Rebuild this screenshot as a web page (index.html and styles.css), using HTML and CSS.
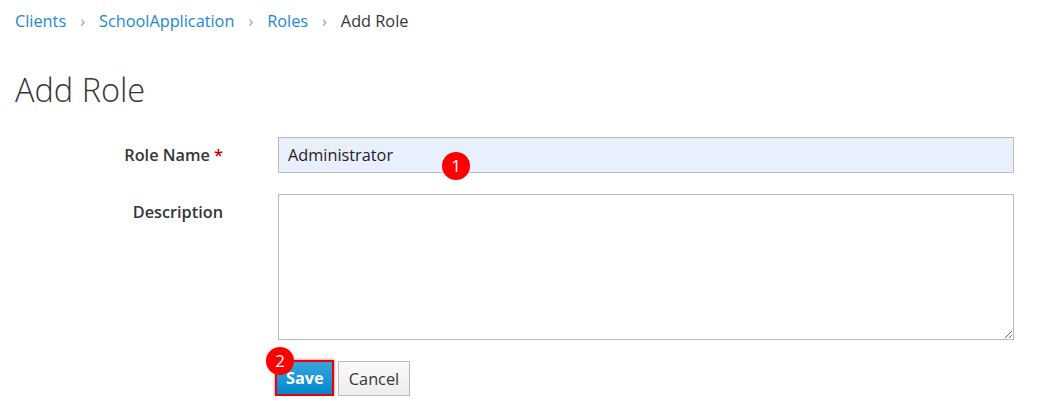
FILE: index.html
```html
<!DOCTYPE html>
<html>
<head>
<meta charset="utf-8">
<link rel="stylesheet" href="styles.css">
</head>
<body>
<div class="page">
  <nav class="breadcrumb">
    <a href="#">Clients</a><span class="sep">›</span>
    <a href="#">SchoolApplication</a><span class="sep">›</span>
    <a href="#">Roles</a><span class="sep">›</span>
    <span class="current">Add Role</span>
  </nav>
  <h1 class="title">Add Role</h1>
  <form class="form">
    <div class="row">
      <label class="label">Role Name <span class="req">*</span></label>
      <div class="field">
        <input class="input" type="text" value="Administrator">
        <span class="badge badge-1">1</span>
      </div>
    </div>
    <div class="row row-desc">
      <label class="label">Description</label>
      <div class="field">
        <textarea class="textarea"></textarea>
      </div>
    </div>
    <div class="actions">
      <div class="save-wrap">
        <button type="button" class="btn btn-primary">Save</button>
        <span class="badge badge-2">2</span>
      </div>
      <button type="button" class="btn btn-default">Cancel</button>
    </div>
  </form>
</div>
</body>
</html>
```
FILE: styles.css
```css
html, body {
  margin: 0;
  padding: 0;
  background: #fff;
}
body {
  font-family: "Open Sans", "Liberation Sans", sans-serif;
  color: #363636;
  font-size: 16px;
}
.page {
  padding: 8px 15px 0 15px;
}
.breadcrumb {
  display: flex;
  align-items: center;
  height: 26px;
  font-size: 16.3px;
}
.breadcrumb a {
  color: #1e87d4;
  text-decoration: none;
}
.breadcrumb .sep {
  color: #9a9c9e;
  margin: 0 14px;
  font-size: 16px;
}
.breadcrumb .current {
  color: #363636;
}
.title {
  margin: 36px 0 0 0;
  font-size: 32.5px;
  font-weight: 300;
  line-height: 40px;
  color: #363636;
}
.form {
  margin-top: 27px;
}
.row {
  display: flex;
  align-items: flex-start;
}
.label {
  width: 263px;
  text-align: right;
  font-weight: 600;
  font-size: 16.3px;
  line-height: 36px;
  padding-right: 55px;
  box-sizing: border-box;
  flex: none;
  color: #363636;
}
.req {
  color: #c00;
}
.field {
  position: relative;
  width: 736px;
}
.input {
  display: block;
  width: 100%;
  height: 36px;
  box-sizing: border-box;
  border: 1px solid #bbb;
  background: #e8f0fe;
  font-family: "Open Sans", "Liberation Sans", sans-serif;
  font-size: 16.3px;
  color: #222;
  padding: 0 9px;
  margin: 0;
  outline: none;
}
.row-desc {
  margin-top: 21px;
}
.textarea {
  display: block;
  width: 100%;
  height: 146px;
  box-sizing: border-box;
  border: 1px solid #bbb;
  background: #fff;
  margin: 0;
  resize: both;
  font-family: "Open Sans", "Liberation Sans", sans-serif;
}
.actions {
  display: flex;
  gap: 4px;
  margin-top: 20px;
  margin-left: 260px;
  align-items: flex-start;
}
.save-wrap {
  position: relative;
}
.btn {
  font-family: "Open Sans", "Liberation Sans", sans-serif;
  font-size: 16.3px;
  height: 36px;
  box-sizing: border-box;
  padding: 0 9px;
  cursor: pointer;
  margin: 0;
}
.btn-primary {
  background: linear-gradient(#39a5dc, #0088ce);
  color: #fff;
  font-weight: 700;
  border: 2px solid #e8000b;
  width: 59px;
  box-shadow: 0 0 3px rgba(200, 0, 0, 0.6);
}
.btn-default {
  background: linear-gradient(#fafafa, #ededed);
  color: #363636;
  border: 1px solid #bbb;
  width: 72px;
  height: 35px;
  margin-top: 1px;
}
.badge {
  position: absolute;
  width: 28px;
  height: 28px;
  border-radius: 50%;
  background: #f00;
  color: #fff;
  font-size: 17px;
  line-height: 28px;
  text-align: center;
  font-family: "Open Sans", "Liberation Sans", sans-serif;
}
.badge-1 {
  left: 164px;
  top: 15px;
}
.badge-2 {
  left: -9px;
  top: -13px;
}
```
